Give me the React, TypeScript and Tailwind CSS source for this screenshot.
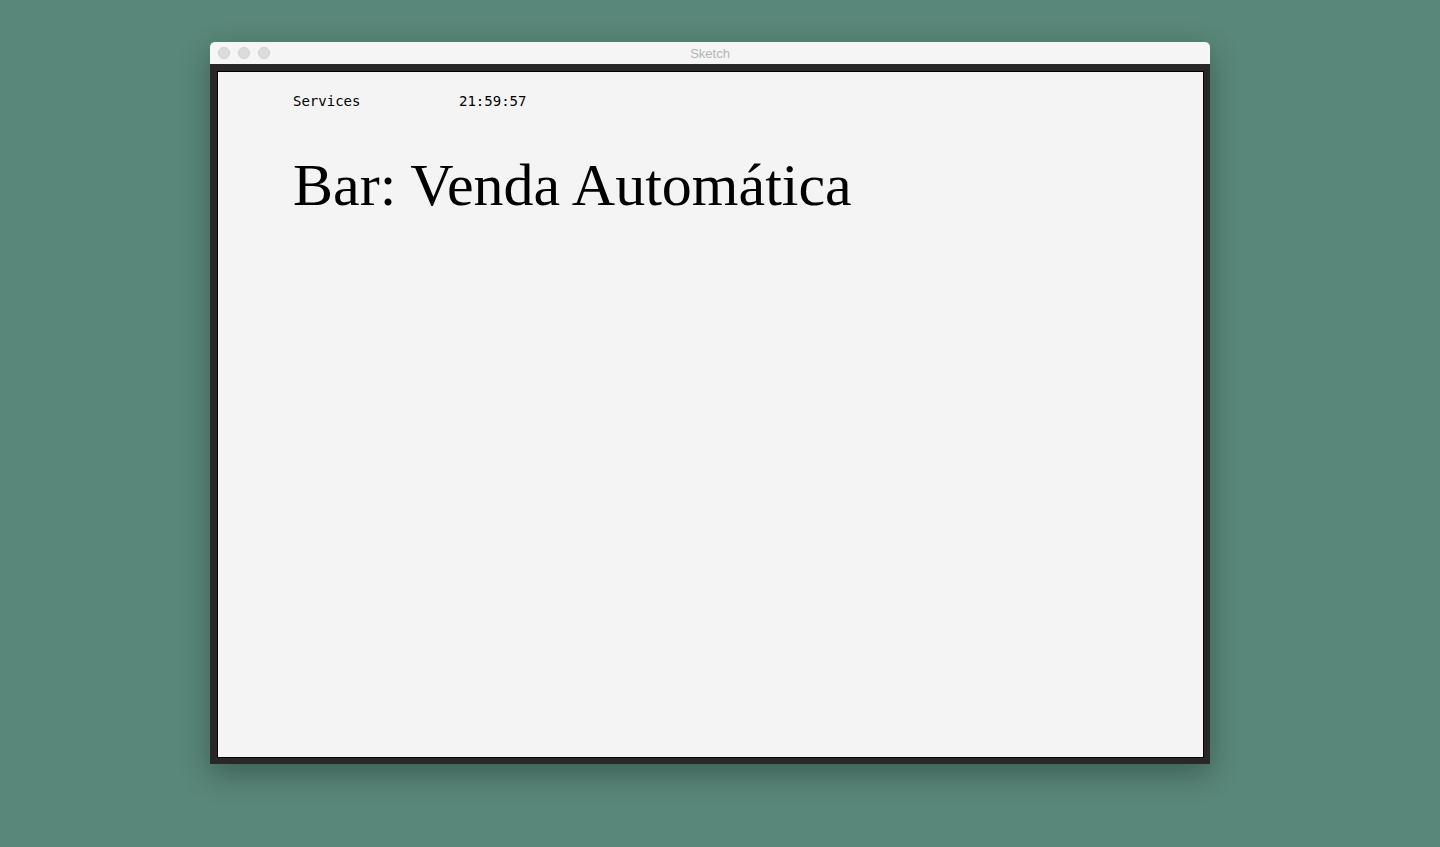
import React from 'react';

const App: React.FC = () => {
  return (
    <div className="w-[1440px] h-[847px] bg-[#598779] pt-[42px] pl-[210px]">
      <div className="w-[1000px] h-[722px] flex flex-col shadow-[0_10px_30px_rgba(0,0,0,0.3)] rounded-t-[5px]">
        {/* title bar */}
        <div className="relative h-[22px] bg-[#f5f5f5] rounded-t-[5px] flex items-center justify-center">
          <div className="absolute left-[8px] top-[5px] flex gap-[8px]">
            <span className="w-[12px] h-[12px] rounded-full bg-[#dcdcdc] border border-[#d0d0d0]" />
            <span className="w-[12px] h-[12px] rounded-full bg-[#dcdcdc] border border-[#d0d0d0]" />
            <span className="w-[12px] h-[12px] rounded-full bg-[#dcdcdc] border border-[#d0d0d0]" />
          </div>
          <span className="text-[13px] text-[#b4b4b4] font-['Liberation_Sans',sans-serif] leading-none mt-[1px]">Sketch</span>
        </div>
        {/* frame */}
        <div className="flex-1 bg-[#282828] pl-[7px] pr-[6px] pt-[7px] pb-[6px]">
          <div className="h-full bg-[#f4f4f4] border border-black pl-[75px] pt-[20px]">
            <div className="flex font-['DejaVu_Sans_Mono',monospace] text-[14px] text-black leading-[18px]">
              <span className="w-[166px]">Services</span>
              <span>21:59:57</span>
            </div>
            <h1 className="mt-[43px] font-['Liberation_Serif',serif] text-[60px] leading-[64px] text-black">
              Bar: Venda Automática
            </h1>
          </div>
        </div>
      </div>
    </div>
  );
};

export default App;
